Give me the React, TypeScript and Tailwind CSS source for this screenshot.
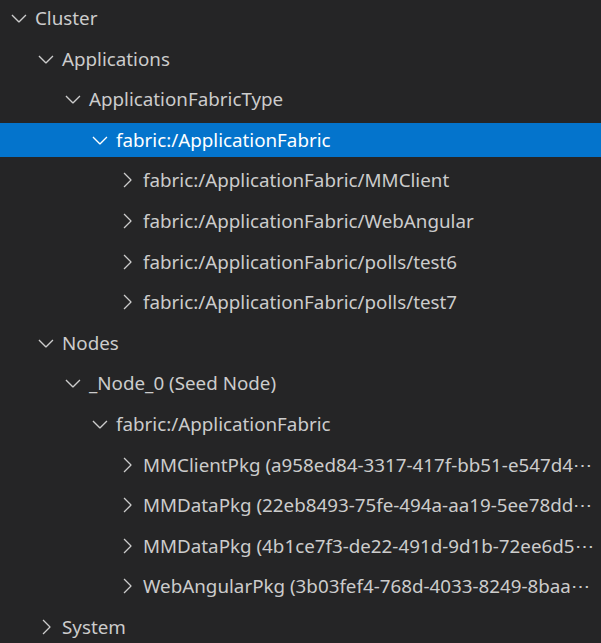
import React from 'react'

type Node = { label: string; depth: number; open: boolean; selected?: boolean }

const rows: Node[] = [
  { label: 'Cluster', depth: 0, open: true },
  { label: 'Applications', depth: 1, open: true },
  { label: 'ApplicationFabricType', depth: 2, open: true },
  { label: 'fabric:/ApplicationFabric', depth: 3, open: true, selected: true },
  { label: 'fabric:/ApplicationFabric/MMClient', depth: 4, open: false },
  { label: 'fabric:/ApplicationFabric/WebAngular', depth: 4, open: false },
  { label: 'fabric:/ApplicationFabric/polls/test6', depth: 4, open: false },
  { label: 'fabric:/ApplicationFabric/polls/test7', depth: 4, open: false },
  { label: 'Nodes', depth: 1, open: true },
  { label: '_Node_0 (Seed Node)', depth: 2, open: true },
  { label: 'fabric:/ApplicationFabric', depth: 3, open: true },
  { label: 'MMClientPkg (a958ed84-3317-417f-bb51-e547d4⋯', depth: 4, open: false },
  { label: 'MMDataPkg (22eb8493-75fe-494a-aa19-5ee78dd⋯', depth: 4, open: false },
  { label: 'MMDataPkg (4b1ce7f3-de22-491d-9d1b-72ee6d5⋯', depth: 4, open: false },
  { label: 'WebAngularPkg (3b03fef4-768d-4033-8249-8baa⋯', depth: 4, open: false },
  { label: 'System', depth: 1, open: false },
]

// indent per level is 27px
const indent = ['pl-[6.5px]', 'pl-[33.5px]', 'pl-[60.5px]', 'pl-[87.5px]', 'pl-[114.5px]']

function Chevron({ open }: { open: boolean }) {
  return (
    <svg width="24" height="24" viewBox="0 0 16 16" fill="currentColor" className="shrink-0">
      {open ? (
        <path fillRule="evenodd" clipRule="evenodd" d="M7.976 10.072l4.357-4.357.62.618L8.284 11h-.618L3 6.333l.619-.618 4.357 4.357z" />
      ) : (
        <path fillRule="evenodd" clipRule="evenodd" d="M10.072 8.024L5.715 3.667l.618-.62L11 7.716v.618L6.333 13l-.618-.619 4.357-4.357z" />
      )}
    </svg>
  )
}

export default function App() {
  return (
    <div
      className="w-[601px] h-[643px] overflow-hidden bg-[#252526] text-[#cccccc] pt-[1px] flex flex-col gap-[6.6px]"
      style={{ fontFamily: '"Noto Sans", "Open Sans", sans-serif' }}
    >
      {rows.map((r, i) => (
        <div
          key={i}
          className={`h-[34px] shrink-0 flex items-center ${indent[r.depth]} ${r.selected ? 'bg-[#0474cc] text-white' : ''}`}
        >
          <Chevron open={r.open} />
          <span className="ml-[4.5px] text-[18.8px] leading-[28px] whitespace-nowrap">
            {r.label}
          </span>
        </div>
      ))}
    </div>
  )
}
